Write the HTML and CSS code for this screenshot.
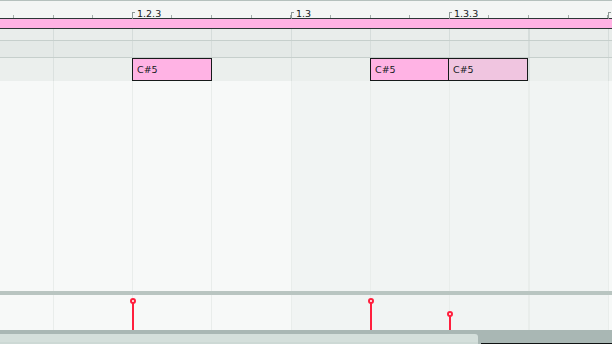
FILE: index.html
```html
<!DOCTYPE html>
<html>
<head>
<meta charset="utf-8">
<link rel="stylesheet" href="styles.css">
</head>
<body>
<div class="editor">
  <div class="topline"></div>
  <div class="ruler">
    <div class="marker" style="left:132px"><span class="label">1.2.3</span></div>
    <div class="marker" style="left:291px"><span class="label">1.3</span></div>
    <div class="marker" style="left:449px"><span class="label">1.3.3</span></div>
    <div class="marker" style="left:608px"></div>
  </div>
  <div class="dark"></div>
  <div class="clipbar"></div>
  <div class="dark"></div>
  <div class="lane lane-a"></div>
  <div class="hline"></div>
  <div class="lane lane-b"></div>
  <div class="hline"></div>
  <div class="noterow">
    <div class="note" style="left:132px;width:80px">C#5</div>
    <div class="note" style="left:370px;width:79px">C#5</div>
    <div class="note note-dim" style="left:448px;width:80px">C#5</div>
  </div>
  <div class="main"></div>
  <div class="band"></div>
  <div class="velocity">
    <div class="stem" style="left:132px;top:7px"></div>
    <div class="stem" style="left:370px;top:7px"></div>
    <div class="stem" style="left:449px;top:20px"></div>
  </div>
  <div class="scroll">
    <div class="thumb"></div>
    <div class="track-line"></div>
  </div>
</div>
</body>
</html>
```
FILE: styles.css
```css
html, body {
  margin: 0;
  padding: 0;
}
body {
  width: 612px;
  height: 344px;
  overflow: hidden;
  background: #f7f9f8;
  font-family: "DejaVu Sans", "Liberation Sans", sans-serif;
}
.editor {
  display: flex;
  flex-direction: column;
  width: 612px;
  height: 344px;
}
.topline {
  height: 1px;
  background: #b5c0bd;
}
.ruler {
  position: relative;
  height: 17px;
  background-color: #f3f5f4;
  background-image: repeating-linear-gradient(to right, #a3adaa 0 1px, transparent 1px 39.625px);
  background-position: 13px 14px;
  background-size: 100% 3px;
  background-repeat: no-repeat;
}
.marker {
  position: absolute;
  top: 11px;
  width: 2px;
  height: 6px;
  border-left: 1px solid #8d9895;
  border-top: 1px solid #8d9895;
}
.label {
  position: absolute;
  left: 4px;
  top: -4px;
  font-size: 9.5px;
  line-height: 9px;
  color: #151b1d;
  white-space: nowrap;
}
.dark {
  height: 1px;
  background: #2c3636;
}
.clipbar {
  height: 9px;
  background: #ffb2e4;
}
.lane {
  background-image:
    repeating-linear-gradient(to right, #d6dddb 0 1px, transparent 1px 79.25px);
  background-position: 53px 0;
  background-repeat: no-repeat;
}
.lane-a {
  height: 11px;
  background-color: #e9edeb;
}
.lane-b {
  height: 16px;
  background-color: #e4e9e7;
}
.hline {
  height: 1px;
  background: #c6cfcc;
}
.noterow {
  position: relative;
  height: 23px;
  background-color: #ebefed;
  background-image:
    repeating-linear-gradient(to right, #dbe1df 0 1px, transparent 1px 79.25px);
  background-position: 53px 0;
  background-repeat: no-repeat;
}
.note {
  position: absolute;
  top: 0;
  height: 23px;
  box-sizing: border-box;
  border: 1px solid #161a1a;
  background: #ffb3e4;
  padding-left: 4px;
  font-size: 9.5px;
  line-height: 21px;
  color: #151a1c;
  display: flex;
  align-items: center;
}
.note-dim {
  background: #f0c5e0;
}
.main,
.velocity {
  background-image:
    repeating-linear-gradient(to right, #e9edeb 0 1px, transparent 1px 79.25px),
    linear-gradient(to right, #f7f9f8 0 291px, #f1f4f3 291px 608px, #f7f9f8 608px);
  background-position: 53px 0, 0 0;
  background-repeat: no-repeat;
}
.main {
  flex: 1;
}
.band {
  height: 4px;
  background: #b9c5c1;
}
.velocity {
  position: relative;
  height: 35px;
}
.stem {
  position: absolute;
  bottom: 0;
  width: 2px;
  background: #ff1f3d;
}
.stem::before {
  content: "";
  position: absolute;
  left: -2px;
  top: -4px;
  width: 2px;
  height: 2px;
  border: 2px solid #ff1f3d;
  border-radius: 50%;
  background: #ffffff;
}
.scroll {
  height: 14px;
  display: flex;
  align-items: flex-end;
  background: #a9b7b4;
}
.thumb {
  width: 478px;
  height: 10px;
  background: #d4dfdb;
  border-top-right-radius: 3px;
  box-shadow: inset 0 -2px 0 #cdd9d5;
}
.track-line {
  flex: 1;
  height: 1px;
  margin-left: 3px;
  background: #0e1212;
}
```
